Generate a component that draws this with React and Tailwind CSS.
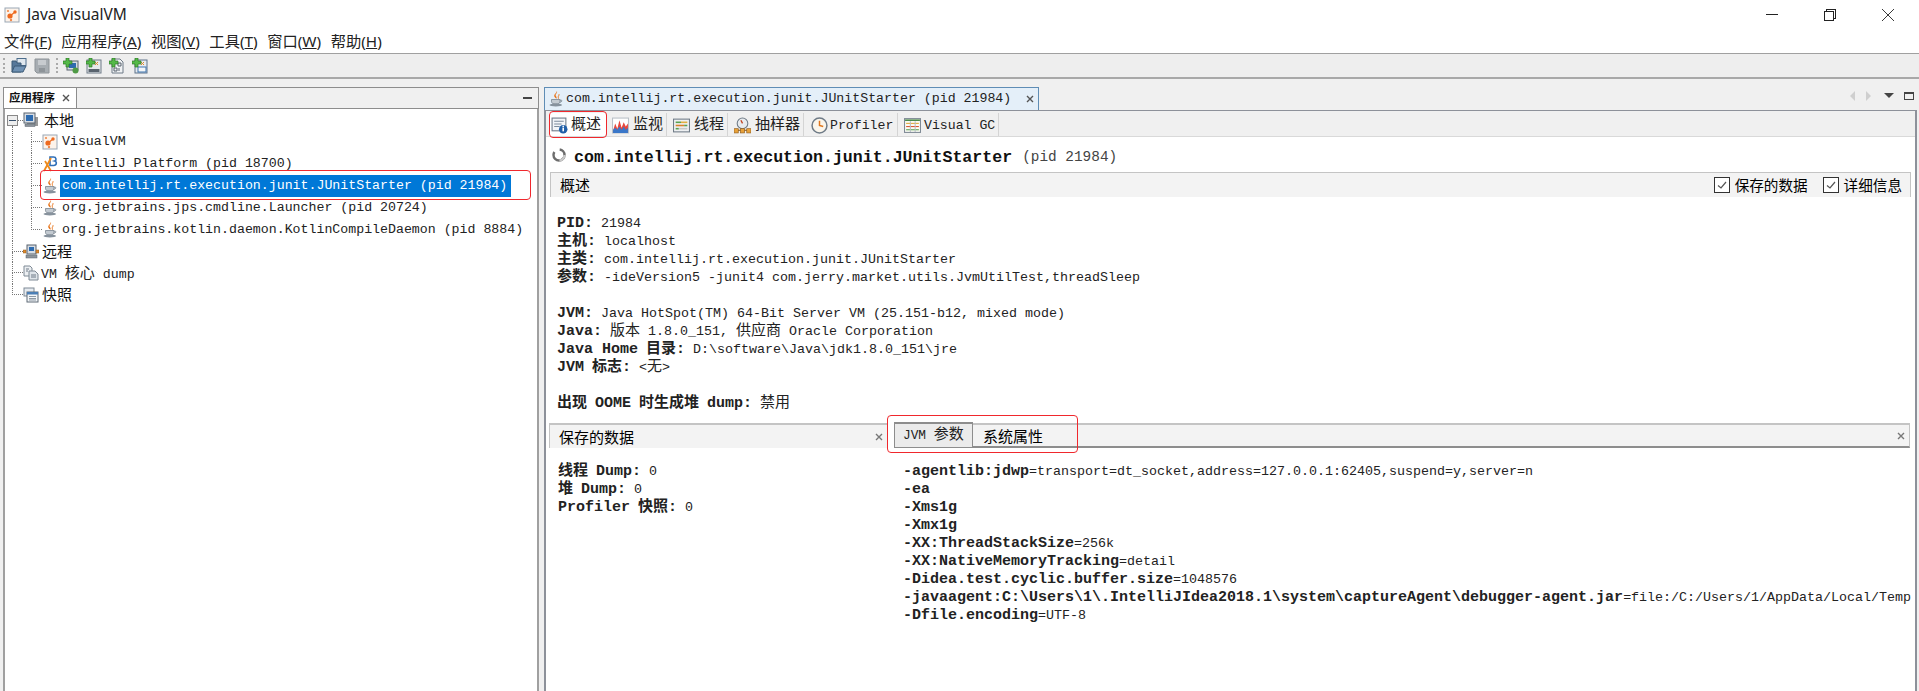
import React from 'react';

const mono = "font-['Liberation_Mono','Noto_Sans_CJK_SC',monospace]";
const sans = "font-['Noto_Sans','Noto_Sans_CJK_SC',sans-serif]";

// Chinese runs are set larger than the latin text around them.
// leading-[0] keeps the mixed fonts from moving the baseline of a line.
const Zh = ({ children, bold, size = 'text-[15px]' }) => (
  <span className={`font-['Noto_Sans_CJK_SC',sans-serif] leading-[0] ${size} ${bold ? 'font-bold' : 'font-normal'}`}>
    {children}
  </span>
);
const B = ({ children }) => <span className="font-bold text-[15px] leading-[0]">{children}</span>;

const Line = ({ children, className = '' }) => (
  <div className={`h-[18px] pt-[2px] leading-[18px] whitespace-nowrap text-[13.33px] text-[#222] ${mono} ${className}`}>
    {children}
  </div>
);

/* ---------- icons ---------- */
const Svg = ({ children, className = 'w-4 h-4' }) => (
  <svg viewBox="0 0 16 16" className={`shrink-0 ${className}`}>{children}</svg>
);

const VmIcon = () => (
  <Svg>
    <rect x="1" y="1" width="14" height="14" fill="#fdf3ea" stroke="#9aa7b5" />
    <circle cx="6" cy="9" r="2.6" fill="#ee6a1f" />
    <circle cx="11" cy="5" r="1.7" fill="#ee6a1f" />
    <circle cx="4" cy="4" r="1.1" fill="#f08a4b" />
    <circle cx="7" cy="13" r="1.2" fill="#f08a4b" />
    <path d="M6 9 11 5" stroke="#ee6a1f" strokeWidth="1.2" />
  </Svg>
);

const IdeaIcon = () => (
  <Svg>
    <path d="M8 1h3.5c3 0 3.2 3.4 1.2 4 2.4.6 2.2 4.5-1 4.5H8z" fill="#fff" stroke="#2f6fb8" strokeWidth="1.6" />
    <path d="M2 15 9 2M3 5l6 10" stroke="#ef8a1a" strokeWidth="1.8" />
  </Svg>
);

const CupIcon = () => (
  <Svg>
    <path d="M8.800 0c1.400 1.800-2 3-1 4.800.5.900 1.200 1.500.7 3-1.300-.9-3-2.200-2.100-4C7 2.600 8.800 1.700 8.800 0z" fill="#e8741a" />
    <path d="M11 3.200c.5 1.200-1.100 1.800-.7 3.200.1.500.3.800.1 1.300" stroke="#e8741a" strokeWidth="1" fill="none" />
    <path d="M3.500 8.500h8.500v2.200c0 1.500-1.500 2.300-4.200 2.300s-4.300-.8-4.300-2.300z" fill="#c3cad1" stroke="#6b7782" strokeWidth=".7" />
    <path d="M12 9.200h1.300c.9 0 .8 2-1.500 2" stroke="#6b7782" fill="none" strokeWidth=".8" />
    <ellipse cx="7.800" cy="14" rx="6.300" ry="1.400" fill="#87929d" />
  </Svg>
);

const ComputerIcon = () => (
  <Svg>
    <rect x="4" y="5" width="11" height="9" fill="#9a9a9a" />
    <rect x="1" y="1" width="11" height="10" fill="#d7dde4" stroke="#59636e" />
    <rect x="3" y="3" width="7" height="6" fill="#2d6bb0" />
    <rect x="2" y="12" width="10" height="2.500" fill="#8d949b" stroke="#59636e" strokeWidth=".5" />
  </Svg>
);

const RemoteIcon = () => (
  <Svg>
    <rect x="4" y="1" width="9" height="9" fill="#d7dde4" stroke="#59636e" />
    <rect x="6" y="3" width="5" height="4" fill="#2d6bb0" />
    <rect x="3" y="11" width="11" height="3" fill="#8d949b" stroke="#59636e" strokeWidth=".5" />
    <rect x="0" y="6" width="3" height="3" fill="#e08a2d" stroke="#8c5a1e" strokeWidth=".5" />
    <rect x="13" y="6" width="3" height="3" fill="#e08a2d" stroke="#8c5a1e" strokeWidth=".5" />
  </Svg>
);

const DumpIcon = () => (
  <Svg>
    <path d="M1 1h6l2 2v8H1z" fill="#eceff2" stroke="#7f8a95" />
    <path d="M6 6h6l3 3v6H6z" fill="#dfe5ea" stroke="#7f8a95" />
    <path d="M3 4h3M3 6h2M8 10h5M8 12h5" stroke="#6f7b87" />
  </Svg>
);

const SnapIcon = () => (
  <Svg>
    <rect x="1" y="1" width="10" height="8" fill="#e6ebf0" stroke="#7f8a95" />
    <rect x="4" y="5" width="11" height="10" fill="#f4f6f8" stroke="#5f6b77" />
    <rect x="4" y="5" width="11" height="2.500" fill="#4c7fb5" />
    <path d="M6 9.500h7M6 11.500h7M6 13h7" stroke="#8d99a5" />
  </Svg>
);

const InfoIcon = () => (
  <Svg className="w-[17px] h-[17px]">
    <rect x="1" y="1" width="13" height="12" fill="#f2f5f8" stroke="#6c7a88" />
    <path d="M3 4h9M3 6.500h7M3 9h5" stroke="#7d8c9b" />
    <circle cx="11.500" cy="11.500" r="4" fill="#1f5fa8" />
    <path d="M11.500 10v3.500" stroke="#fff" strokeWidth="1.500" />
    <circle cx="11.500" cy="8.800" r=".8" fill="#fff" />
  </Svg>
);

const ChartIcon = () => (
  <Svg className="w-[17px] h-[17px]">
    <rect x=".5" y="1" width="15" height="14" fill="#fff" stroke="#b9c0c7" />
    <path d="M1 13 3 6l2 5 2-8 2 7 2-5 2 4 2-3v9H1z" fill="#e8483c" />
    <path d="M1 15v-3l2-2 2 2 2-3 2 3 2-3 2 3 2-2v5z" fill="#3a77c9" />
  </Svg>
);

const ThreadIcon = () => (
  <Svg className="w-[17px] h-[17px]">
    <rect x=".5" y="2" width="15" height="12" fill="#eef0f2" stroke="#6f7b87" />
    <path d="M2.500 5h5" stroke="#59a14f" strokeWidth="1.500" />
    <path d="M7.500 5h6" stroke="#e0b040" strokeWidth="1.500" />
    <path d="M2.500 8h8" stroke="#d9822b" strokeWidth="1.500" />
    <path d="M10.500 8h3" stroke="#59a14f" strokeWidth="1.500" />
    <path d="M2.500 11h3" stroke="#59a14f" strokeWidth="1.500" />
    <path d="M5.500 11h8" stroke="#c9c9c9" strokeWidth="1.500" />
  </Svg>
);

const SamplerIcon = () => (
  <Svg className="w-[17px] h-[17px]">
    <circle cx="8" cy="6" r="5" fill="#e8ebee" stroke="#6f7b87" />
    <path d="M8 6 6.500 3" stroke="#c2411d" strokeWidth="1.200" />
    <path d="M1.500 12.500h13" stroke="#8c5a1e" />
    <rect x="0" y="11" width="4" height="4" fill="#e8a23a" stroke="#8c5a1e" strokeWidth=".6" />
    <rect x="6" y="11" width="4" height="4" fill="#e8a23a" stroke="#8c5a1e" strokeWidth=".6" />
    <rect x="12" y="11" width="4" height="4" fill="#e8a23a" stroke="#8c5a1e" strokeWidth=".6" />
  </Svg>
);

const ClockIcon = () => (
  <Svg className="w-[17px] h-[17px]">
    <circle cx="8" cy="8" r="7" fill="#fbf6ec" stroke="#6f7b87" strokeWidth="1.400" />
    <path d="M8 3.500V8l3.500 1" stroke="#e0761c" strokeWidth="1.400" fill="none" />
  </Svg>
);

const GcIcon = () => (
  <Svg className="w-[17px] h-[17px]">
    <rect x=".5" y="1.500" width="15" height="13" fill="#fbfbf4" stroke="#7f8a95" />
    <path d="M1 3h14" stroke="#4c8a4c" strokeWidth="1.500" />
    <path d="M2 6h12" stroke="#e0a93a" />
    <path d="M2 9h12" stroke="#d9532c" />
    <path d="M2 12h12" stroke="#59a14f" />
    <path d="M6 4v10M10.500 4v10" stroke="#b9c0c7" />
  </Svg>
);

const Spinner = () => (
  <svg viewBox="0 0 16 16" className="w-4 h-4 shrink-0 -mt-[6px]">
    <circle cx="8" cy="8" r="5.500" fill="none" stroke="#6d6d6d" strokeWidth="2.400" strokeDasharray="20 6" />
    <circle cx="8" cy="8" r="5.500" fill="none" stroke="#c9c9c9" strokeWidth="2.400" strokeDasharray="8 27" />
  </svg>
);

const Plus = () => <path d="M3 0h3v3h3v3H6v3H3V6H0V3h3z" fill="#54b948" stroke="#2f7a2a" strokeWidth=".7" />;

const Grip = () => <div className="w-[3px] h-[15px] mx-[1px] border-l-2 border-dotted border-[#aaa]" />;

const ToolFolder = () => (
  <Svg>
    <rect x="6" y="0.500" width="9" height="7" fill="#dfe7ee" stroke="#4c6d8c" />
    <path d="M1 6V3h4l1 2h4v9H1z" fill="#57789a" stroke="#3d5a76" />
    <path d="M1 14 3.500 8H15l-3 6z" fill="#6f91b3" stroke="#3d5a76" />
  </Svg>
);
const ToolSave = () => (
  <Svg>
    <path d="M1 1h14v14H3l-2-2z" fill="#a7adb2" stroke="#8e9499" />
    <rect x="4" y="2" width="8" height="5" fill="#c7cbcf" />
    <rect x="5" y="10" width="6" height="4" fill="#8e9499" />
  </Svg>
);
const ToolRemote = () => (
  <Svg>
    <rect x="4" y="3" width="11" height="9" fill="#d7dde4" stroke="#59636e" />
    <rect x="6" y="5" width="7" height="5" fill="#2d6bb0" />
    <circle cx="12.500" cy="12.500" r="3" fill="#4f9a45" />
    <Plus />
  </Svg>
);
const ToolJmx = () => (
  <Svg>
    <rect x="1" y="2" width="14" height="13" fill="#e6e9ec" stroke="#6f7b87" />
    <path d="M2.500 11h11v3h-11z" fill="#59636e" />
    <path d="M9 4l3 3M12 4 9 7" stroke="#e08a2d" />
    <Plus />
  </Svg>
);
const ToolCore = () => (
  <Svg>
    <path d="M3 1h8l3 3v11H3z" fill="#f0f2f4" stroke="#6f7b87" />
    <path d="M9 5h3v3H9zM5 10h3v3H5zM10 10v3" fill="none" stroke="#59636e" />
    <Plus />
  </Svg>
);
const ToolSnap = () => (
  <Svg>
    <rect x="3" y="2" width="12" height="13" fill="#e6ebf0" stroke="#5f7389" />
    <rect x="6" y="9" width="8" height="5" fill="#f4f6f8" stroke="#3f74ad" />
    <path d="M9 4l3 3M12 4 9 7" stroke="#e08a2d" />
    <Plus />
  </Svg>
);

const CloseX = ({ className = 'text-[#777]' }) => (
  <svg viewBox="0 0 8 8" className={`w-2 h-2 shrink-0 ${className}`}>
    <path d="M1 1l6 6M7 1 1 7" stroke="currentColor" strokeWidth="1.400" />
  </svg>
);

const Check = () => (
  <div className="w-4 h-4 bg-white border border-[#333] flex items-center justify-center">
    <svg viewBox="0 0 12 12" className="w-3 h-3">
      <path d="M2 6.500 5 9l5-6" fill="none" stroke="#555" strokeWidth="1.200" />
    </svg>
  </div>
);

/* ---------- tree ---------- */
const Guide = ({ branch, last, w = 'w-[19px]' }) => (
  <div className={`${w} shrink-0 h-full flex flex-col`}>
    <div className={`h-1/2 border-l border-dotted border-[#777] ${branch ? 'border-b' : ''}`} />
    <div className={`h-1/2 ${last ? '' : 'border-l border-dotted border-[#777]'}`} />
  </div>
);

const Row = ({ children, h = 'h-[22px]' }) => <div className={`${h} flex items-center pl-[7px] whitespace-nowrap`}>{children}</div>;

const treeApps = [
  { icon: <VmIcon />, label: 'VisualVM' },
  { icon: <IdeaIcon />, label: 'IntelliJ Platform (pid 18700)' },
  { icon: <CupIcon />, label: 'com.intellij.rt.execution.junit.JUnitStarter (pid 21984)', selected: true },
  { icon: <CupIcon />, label: 'org.jetbrains.jps.cmdline.Launcher (pid 20724)' },
  { icon: <CupIcon />, label: 'org.jetbrains.kotlin.daemon.KotlinCompileDaemon (pid 8884)', last: true },
];

const treeLabel = `text-[13.25px] text-[#222] ${mono}`;

const LeftPanel = () => (
  <div className="w-[536px] ml-[3px] shrink-0 flex flex-col">
    <div className="h-[21px] flex border-b border-[#8d8d8d] box-content">
      <div className="w-[74px] -mb-px bg-white border border-[#8d8d8d] flex items-center pl-[5px]">
        <span className={`text-[11.5px] font-bold text-[#111] ${sans}`}>应用程序</span>
        <CloseX className="text-[#555] ml-[7px]" />
      </div>
      <div className="flex-1 flex justify-end items-center pr-[6px] border-t border-r border-[#8d8d8d]">
        <div className="w-[9px] h-[2px] bg-[#444]" />
      </div>
    </div>
    <div className="flex-1 bg-white border-l-2 border-r-2 border-[#a0a0a0]">
      <Row>
        <div className="relative w-[11px] h-[11px] -ml-[5px] shrink-0 bg-[#eee] border border-[#888] flex items-center justify-center">
          <div className="w-[7px] h-px bg-[#36506c]" />
          <div className="absolute left-[4px] top-[10px] h-[6px] border-l border-dotted border-[#777]" />
        </div>
        <div className="w-[5px] border-b border-dotted border-[#777]" />
        <ComputerIcon />
        <span className={`ml-[5px] text-[#111] text-[15px] ${sans}`}>本地</span>
      </Row>
      {treeApps.map((a) => (
        <Row key={a.label}>
          <Guide />
          <Guide branch last={a.last} w="w-[11px]" />
          {a.icon}
          <span
            className={`ml-[2px] pl-[2px] pr-[4px] h-[22px] leading-[22px] ${treeLabel} ${a.selected ? 'bg-[#0078d7] text-white' : ''}`}
          >
            {a.label}
          </span>
        </Row>
      ))}
      <Row h="h-[21px]">
        <Guide branch w="w-[11px]" />
        <RemoteIcon />
        <span className={`ml-[3px] text-[#111] text-[15px] ${sans}`}>远程</span>
      </Row>
      <Row>
        <Guide branch w="w-[11px]" />
        <DumpIcon />
        <span className={`ml-[2px] pt-[4px] ${treeLabel}`}>
          VM <Zh>核心</Zh> dump
        </span>
      </Row>
      <Row h="h-[21px]">
        <Guide branch last w="w-[11px]" />
        <SnapIcon />
        <span className={`ml-[3px] text-[#111] text-[15px] ${sans}`}>快照</span>
      </Row>
    </div>
  </div>
);

/* ---------- right side ---------- */
const subTabs = [
  { icon: <InfoIcon />, label: <Zh>概述</Zh>, cls: 'w-[58px] pl-[2px] gap-[3px] bg-white' },
  { icon: <ChartIcon />, label: <Zh>监视</Zh>, cls: 'w-[60px] pl-[5px] gap-[4px]' },
  { icon: <ThreadIcon />, label: <Zh>线程</Zh>, cls: 'w-[61px] pl-[6px] gap-[4px]' },
  { icon: <SamplerIcon />, label: <Zh>抽样器</Zh>, cls: 'w-[76px] pl-[6px] gap-[4px]' },
  { icon: <ClockIcon />, label: 'Profiler', cls: 'w-[94px] pl-[7px] gap-[2px]' },
  { icon: <GcIcon />, label: 'Visual GC', cls: 'w-[101px] pl-[6px] gap-[3px]' },
];

const RightPanel = () => (
  <div className="flex-1 min-w-0 ml-[5px] mr-[2px] flex flex-col">
    {/* editor tab strip */}
    <div className="h-[23px] flex">
      <div className="w-[495px] bg-[#e4eff9] border-t border-l border-r border-[#5f8db5] flex items-center pl-[3px]">
        <CupIcon />
        <span className={`ml-[2px] text-[13.25px] text-[#222] whitespace-nowrap ${mono}`}>
          com.intellij.rt.execution.junit.JUnitStarter (pid 21984)
        </span>
        <CloseX className="text-[#555] ml-[15px]" />
      </div>
      <div className="flex-1 flex items-center justify-end gap-[10px] pr-[3px] pb-[6px]">
        <div className="w-0 h-0 border-y-[5px] border-y-transparent border-r-[5px] border-r-[#cfcfcf]" />
        <div className="w-0 h-0 mx-[1px] border-y-[5px] border-y-transparent border-l-[5px] border-l-[#cfcfcf]" />
        <div className="w-0 h-0 ml-[2px] border-x-[5px] border-x-transparent border-t-[5px] border-t-[#444]" />
        <div className="w-[10px] h-[8px] border border-[#444] border-t-2" />
      </div>
    </div>

    <div className="flex-1 bg-white border-t border-l-2 border-r-2 border-[#8d919a] flex flex-col">
      {/* sub tabs */}
      <div className="h-[26px] bg-[#f0f0f0] border-b border-[#d9d9d9] flex items-end pl-[3px]">
        {subTabs.map((t) => (
          <div
            key={t.cls}
            className={`${t.cls} h-[23px] pt-[2px] flex items-center border-r border-[#d4d4d4] text-[13.2px] text-[#222] whitespace-nowrap ${mono}`}
          >
            {t.icon}
            <span className="pt-[1px]">{t.label}</span>
          </div>
        ))}
      </div>

      {/* title */}
      <div className="h-[35px] pt-[7px] flex items-center pl-[5px] whitespace-nowrap">
        <Spinner />
        <span className={`ml-[7px] text-[16.6px] font-bold text-[#111] ${mono}`}>com.intellij.rt.execution.junit.JUnitStarter</span>
        <span className={`ml-[10px] text-[14.4px] text-[#444] ${mono}`}>(pid 21984)</span>
      </div>

      {/* overview */}
      <div className="mx-[4px] h-[25px] bg-[#f3f3f3] border-t border-l border-r border-[#c4c4c4] flex items-center pl-[9px] pr-[8px]">
        <Zh>概述</Zh>
        <div className="ml-auto flex items-center">
          <Check />
          <span className="ml-[5px] mr-[15px]"><Zh size="text-[14.6px]">保存的数据</Zh></span>
          <Check />
          <span className="ml-[5px]"><Zh size="text-[14.6px]">详细信息</Zh></span>
        </div>
      </div>

      <div className="pl-[11px] pt-[16px]">
        <Line><B>PID:</B> 21984</Line>
        <Line><Zh bold>主机</Zh><B>:</B> localhost</Line>
        <Line><Zh bold>主类</Zh><B>:</B> com.intellij.rt.execution.junit.JUnitStarter</Line>
        <Line><Zh bold>参数</Zh><B>:</B> -ideVersion5 -junit4 com.jerry.market.utils.JvmUtilTest,threadSleep</Line>
        <div className="h-[18px]" />
        <Line><B>JVM:</B> Java HotSpot(TM) 64-Bit Server VM (25.151-b12, mixed mode)</Line>
        <Line><B>Java:</B> <Zh>版本</Zh> 1.8.0_151, <Zh>供应商</Zh> Oracle Corporation</Line>
        <Line><B>Java Home</B> <Zh bold>目录</Zh><B>:</B> D:\software\Java\jdk1.8.0_151\jre</Line>
        <Line><B>JVM</B> <Zh bold>标志</Zh><B>:</B> &lt;<Zh>无</Zh>&gt;</Line>
        <div className="h-[18px]" />
        <Line><Zh bold>出现</Zh> <B>OOME</B> <Zh bold>时生成堆</Zh> <B>dump:</B> <Zh>禁用</Zh></Line>
      </div>

      {/* saved data + jvm args */}
      <div className="mt-[12px] ml-[3px] mr-[5px] flex flex-1 min-h-0">
        <div className="w-[339px] shrink-0">
          <div className="h-[25px] bg-[#f3f3f3] border-t-2 border-l border-[#c4c4c4] flex items-center pl-[9px] pr-[5px]">
            <Zh>保存的数据</Zh>
            <CloseX className="ml-auto text-[#777]" />
          </div>
          <div className="pl-[9px] pt-[13px]">
            <Line><Zh bold>线程</Zh> <B>Dump:</B> 0</Line>
            <Line><Zh bold>堆</Zh> <B>Dump:</B> 0</Line>
            <Line><B>Profiler</B> <Zh bold>快照</Zh><B>:</B> 0</Line>
          </div>
        </div>
        <div className="flex-1 min-w-0 ml-[6px]">
          <div className="h-[25px] bg-[#f3f3f3] border-y-2 border-r border-t-[#c4c4c4] border-b-[#8d8d8d] border-r-[#c4c4c4] flex items-center pr-[4px]">
            <div className="w-[79px] h-[25px] pt-[1px] shrink-0 bg-[#ebebeb] border-x border-[#8d8d8d] border-t-2 -mt-[2px] flex items-center pl-[8px]">
              <span className={`text-[12.8px] text-[#222] ${mono}`}>JVM <Zh>参数</Zh></span>
            </div>
            <span className="ml-[10px]"><Zh>系统属性</Zh></span>
            <CloseX className="ml-auto text-[#777]" />
          </div>
          <div className="pl-[9px] pt-[13px]">
            <Line><B>-agentlib:jdwp</B>=transport=dt_socket,address=127.0.0.1:62405,suspend=y,server=n</Line>
            <Line><B>-ea</B></Line>
            <Line><B>-Xms1g</B></Line>
            <Line><B>-Xmx1g</B></Line>
            <Line><B>-XX:ThreadStackSize</B>=256k</Line>
            <Line><B>-XX:NativeMemoryTracking</B>=detail</Line>
            <Line><B>-Didea.test.cyclic.buffer.size</B>=1048576</Line>
            <Line><B>-javaagent:C:\Users\1\.IntelliJIdea2018.1\system\captureAgent\debugger-agent.jar</B>=file:/C:/Users/1/AppData/Local/Temp</Line>
            <Line><B>-Dfile.encoding</B>=UTF-8</Line>
          </div>
        </div>
      </div>
    </div>
  </div>
);

const menus = [
  ['文件(', 'F', ')'],
  ['应用程序(', 'A', ')'],
  ['视图(', 'V', ')'],
  ['工具(', 'T', ')'],
  ['窗口(', 'W', ')'],
  ['帮助(', 'H', ')'],
];

// red marks drawn on top of the screenshot
const Mark = ({ className }) => (
  <div className={`absolute border border-[#f0282d] rounded-[4px] pointer-events-none ${className}`} />
);

export default function App() {
  return (
    <div className={`relative w-[1919px] h-[691px] overflow-hidden bg-[#f0f0f0] flex flex-col ${sans}`}>
      {/* title bar */}
      <div className="h-[30px] pb-[1px] bg-white flex items-center pl-[4px] shrink-0">
        <VmIcon />
        <span className="ml-[7px] text-[15.5px] text-[#222]">Java VisualVM</span>
        <div className="ml-auto flex items-center gap-[46px] pr-[25px]">
          <div className="w-[12px] h-px bg-[#222]" />
          <div className="relative w-[12px] h-[12px]">
            <div className="absolute left-[2px] top-0 w-[10px] h-[10px] border border-[#222]" />
            <div className="absolute left-0 top-[2px] w-[10px] h-[10px] border border-[#222] bg-white" />
          </div>
          <svg viewBox="0 0 12 12" className="w-[12px] h-[12px]">
            <path d="M0 0l12 12M12 0 0 12" stroke="#222" strokeWidth=".9" />
          </svg>
        </div>
      </div>

      {/* menu bar */}
      <div className="h-[24px] pb-[2px] bg-white border-b border-[#a0a0a0] flex items-center pl-[4px] gap-[9.5px] shrink-0">
        {menus.map(([a, k, c]) => (
          <span key={k} className="text-[15.3px] leading-[20px] text-[#222]">
            {a}<span className="underline">{k}</span>{c}
          </span>
        ))}
      </div>

      {/* tool bar */}
      <div className="h-[25px] bg-[#eeeeee] border-b-2 border-[#a8a8a8] flex items-center pl-[2px] shrink-0">
        <Grip />
        <div className="ml-[4px] flex gap-[7px]">
          <ToolFolder />
          <ToolSave />
        </div>
        <div className="ml-[5px]"><Grip /></div>
        <div className="ml-[3px] flex gap-[7px]">
          <ToolRemote />
          <ToolJmx />
          <ToolCore />
          <ToolSnap />
        </div>
      </div>

      {/* work area */}
      <div className="flex-1 min-h-0 flex pt-[8px]">
        <LeftPanel />
        <RightPanel />
      </div>

      <Mark className="left-[40px] top-[170px] w-[491px] h-[30px]" />
      <Mark className="left-[549px] top-[111px] w-[58px] h-[27px]" />
      <Mark className="left-[887px] top-[415px] w-[191px] h-[38px]" />
    </div>
  );
}
